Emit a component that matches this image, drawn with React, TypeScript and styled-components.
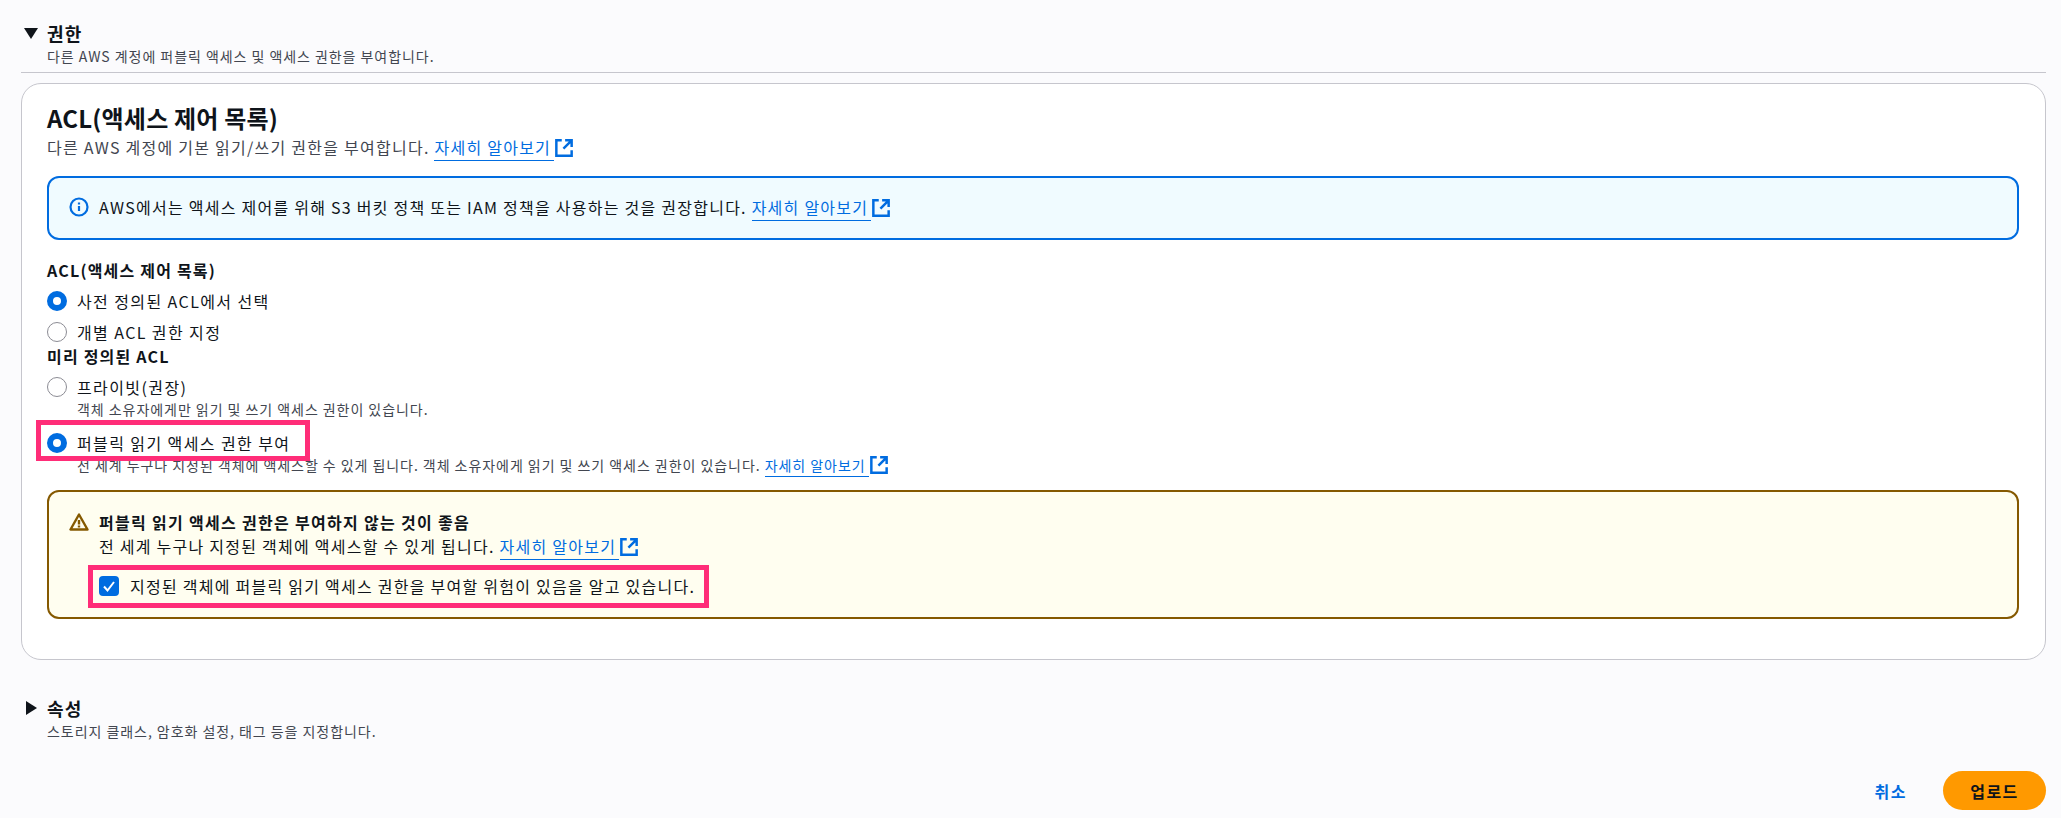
import React from 'react';
import styled, { createGlobalStyle } from 'styled-components';

const GlobalStyle = createGlobalStyle`
    html, body {
        margin: 0;
        padding: 0;
        background: #fbfbfd;
    }
    body {
        font-family: "Noto Sans CJK KR", "Noto Sans", sans-serif;
        color: #16191f;
        font-size: 16px;
        letter-spacing: 1.25px;
    }
`;

const Page = styled.div`
    width: 2061px;
    height: 818px;
    overflow: hidden;
    box-sizing: border-box;
    padding: 20px 15px 0 21px;
`;

const SectionHeader = styled.div<{ $open?: boolean }>`
    display: flex;
    align-items: flex-start;
    gap: 9px;
    padding-left: 3px;
    height: ${p => (p.$open ? '52px' : 'auto')};
    border-bottom: ${p => (p.$open ? '1px solid #c6c6cd' : 'none')};
`;

const Caret = styled.svg`
    width: 14px;
    height: 14px;
    margin-top: 6px;
    flex: none;
`;

const SectionTitle = styled.div`
    font-size: 18px;
    font-weight: 700;
    line-height: 26px;
    letter-spacing: 1.2px;
    color: #0f141a;
`;

const SectionDesc = styled.div`
    font-size: 14px;
    line-height: 20px;
    letter-spacing: 0.95px;
    color: #424650;
`;

const Card = styled.section`
    margin-top: 10px;
    height: 577px;
    box-sizing: border-box;
    border: 1px solid #c6c6cd;
    border-radius: 20px;
    background: #fff;
    padding: 18px 26px 0 25px;
`;

const CardTitle = styled.h2`
    margin: 0;
    font-size: 24px;
    font-weight: 700;
    line-height: 32px;
    letter-spacing: 0.2px;
    color: #0f141a;
`;

const CardDesc = styled.p`
    margin: 1px 0 0;
    font-size: 16px;
    line-height: 24px;
    color: #424650;
`;

const Link = styled.a`
    color: #006ce0;
    text-decoration: none;
    border-bottom: 1px solid #006ce0;
    padding: 0 3px 1px 0;
`;

const ExtIcon = styled.svg`
    width: 18px;
    height: 18px;
    margin-left: 1px;
    vertical-align: -3px;
    color: #006ce0;
`;

const Alert = styled.div<{ $kind: 'info' | 'warning' }>`
    display: flex;
    gap: 10px;
    box-sizing: border-box;
    border-radius: 12px;
    border: 2px solid ${p => (p.$kind === 'info' ? '#006ce0' : '#855900')};
    background: ${p => (p.$kind === 'info' ? '#f0fbff' : '#fffef0')};
    padding: ${p => (p.$kind === 'info' ? '17px 20px' : '18px 20px')};
    height: ${p => (p.$kind === 'info' ? '64px' : '129px')};
    margin-top: ${p => (p.$kind === 'info' ? '17px' : '15px')};
`;

const AlertIcon = styled.svg`
    width: 20px;
    height: 20px;
    flex: none;
    margin-top: 2px;
`;

const AlertText = styled.div`
    font-size: 16px;
    line-height: 24px;
    color: #0f141a;
`;

const AlertTitle = styled.div`
    font-weight: 700;
    letter-spacing: 1.3px;
`;

const Fields = styled.div`
    margin-top: 18px;
`;

const Label = styled.div`
    font-size: 16px;
    font-weight: 700;
    line-height: 24px;
    letter-spacing: 1.2px;
    color: #0f141a;
`;

const RadioRow = styled.div<{ $top?: number }>`
    position: relative;
    display: flex;
    align-items: center;
    gap: 10px;
    height: 24px;
    margin-top: ${p => p.$top ?? 7}px;
    font-size: 16px;
    letter-spacing: 1.4px;
    color: #0f141a;
`;

const Radio = styled.span<{ $checked?: boolean }>`
    width: 20px;
    height: 20px;
    box-sizing: border-box;
    border-radius: 50%;
    flex: none;
    background: #fff;
    border: ${p => (p.$checked ? '6px solid #006ce0' : '1.5px solid #8c8c94')};
`;

const RadioDesc = styled.div`
    margin-left: 30px;
    font-size: 14px;
    line-height: 20px;
    letter-spacing: 0.95px;
    color: #424650;
`;

// annotation drawn over the screenshot, sits on top of the row it marks
const Highlight = styled.span<{ $w: number; $h: number; $x: number; $y: number }>`
    position: absolute;
    left: ${p => p.$x}px;
    top: ${p => p.$y}px;
    width: ${p => p.$w}px;
    height: ${p => p.$h}px;
    box-sizing: border-box;
    border: 5px solid #ff2d78;
    pointer-events: none;
`;

const CheckRow = styled.div`
    position: relative;
    display: flex;
    align-items: center;
    gap: 11px;
    height: 24px;
    margin-top: 16px;
    color: #0f141a;
`;

const Checkbox = styled.span`
    width: 20px;
    height: 20px;
    border-radius: 4px;
    background: #006ce0;
    display: flex;
    align-items: center;
    justify-content: center;
    flex: none;
`;

const Collapsed = styled.div`
    margin-top: 35px;
`;

const Footer = styled.div`
    display: flex;
    justify-content: flex-end;
    align-items: center;
    gap: 36px;
    margin-top: 30px;
`;

const TextButton = styled.span`
    font-size: 16px;
    font-weight: 700;
    letter-spacing: 1.5px;
    color: #006ce0;
`;

const PrimaryButton = styled.span`
    width: 103px;
    height: 39px;
    border-radius: 20px;
    background: #ff9900;
    color: #0f141a;
    font-size: 16px;
    font-weight: 700;
    letter-spacing: 1.5px;
    display: flex;
    align-items: center;
    justify-content: center;
`;

const External = () => (
    <ExtIcon viewBox="1 1 16 16" fill="none" stroke="currentColor" strokeWidth="2.2">
        <path d="M7 2.2H2.2v13.6h13.6V11" />
        <path d="M10 2.2h5.8V8M15.8 2.2L8.5 9.5" />
    </ExtIcon>
);

const LearnMore = () => (
    <>
        <Link>자세히 알아보기</Link>
        <External />
    </>
);

const App = () => (
    <Page>
        <GlobalStyle />
        <SectionHeader $open>
            <Caret viewBox="0 0 14 14"><path d="M0 2h14L7 13z" fill="#0f141a" /></Caret>
            <div>
                <SectionTitle>권한</SectionTitle>
                <SectionDesc>다른 AWS 계정에 퍼블릭 액세스 및 액세스 권한을 부여합니다.</SectionDesc>
            </div>
        </SectionHeader>

        <Card>
            <CardTitle>ACL(액세스 제어 목록)</CardTitle>
            <CardDesc>다른 AWS 계정에 기본 읽기/쓰기 권한을 부여합니다. <LearnMore /></CardDesc>

            <Alert $kind="info">
                <AlertIcon viewBox="0 0 20 20" fill="none" stroke="#006ce0" strokeWidth="2.2">
                    <circle cx="10" cy="10" r="8.5" />
                    <path d="M10 9v5M10 5.5v2" />
                </AlertIcon>
                <AlertText>AWS에서는 액세스 제어를 위해 S3 버킷 정책 또는 IAM 정책을 사용하는 것을 권장합니다. <LearnMore /></AlertText>
            </Alert>

            <Fields>
                <Label>ACL(액세스 제어 목록)</Label>
                <RadioRow><Radio $checked />사전 정의된 ACL에서 선택</RadioRow>
                <RadioRow><Radio />개별 ACL 권한 지정</RadioRow>
                <Label>미리 정의된 ACL</Label>
                <RadioRow><Radio />프라이빗(권장)</RadioRow>
                <RadioDesc>객체 소유자에게만 읽기 및 쓰기 액세스 권한이 있습니다.</RadioDesc>
                <RadioRow $top={12}>
                    <Radio $checked />퍼블릭 읽기 액세스 권한 부여
                    <Highlight $x={-11} $y={-11} $w={274} $h={41} />
                </RadioRow>
                <RadioDesc>전 세계 누구나 지정된 객체에 액세스할 수 있게 됩니다. 객체 소유자에게 읽기 및 쓰기 액세스 권한이 있습니다. <LearnMore /></RadioDesc>
            </Fields>

            <Alert $kind="warning">
                <AlertIcon viewBox="0 0 20 20" fill="none" stroke="#855900" strokeWidth="2.4" strokeLinejoin="round">
                    <path d="M10 2.5L1.5 17.5h17z" />
                    <path d="M10 8v4.5M10 13.5v2" />
                </AlertIcon>
                <AlertText>
                    <AlertTitle>퍼블릭 읽기 액세스 권한은 부여하지 않는 것이 좋음</AlertTitle>
                    <div>전 세계 누구나 지정된 객체에 액세스할 수 있게 됩니다. <LearnMore /></div>
                    <CheckRow>
                        <Checkbox>
                            <svg width="14" height="14" viewBox="0 0 14 14" fill="none" stroke="#fff" strokeWidth="2"><path d="M2 7.5L5.5 11.5 12 3" /></svg>
                        </Checkbox>
                        지정된 객체에 퍼블릭 읽기 액세스 권한을 부여할 위험이 있음을 알고 있습니다.
                        <Highlight $x={-11} $y={-9} $w={621} $h={43} />
                    </CheckRow>
                </AlertText>
            </Alert>
        </Card>

        <Collapsed>
            <SectionHeader>
                <Caret viewBox="0 0 14 14"><path d="M2 0v14L13 7z" fill="#0f141a" /></Caret>
                <div>
                    <SectionTitle>속성</SectionTitle>
                    <SectionDesc>스토리지 클래스, 암호화 설정, 태그 등을 지정합니다.</SectionDesc>
                </div>
            </SectionHeader>
        </Collapsed>

        <Footer>
            <TextButton>취소</TextButton>
            <PrimaryButton>업로드</PrimaryButton>
        </Footer>
    </Page>
);

export default App;
